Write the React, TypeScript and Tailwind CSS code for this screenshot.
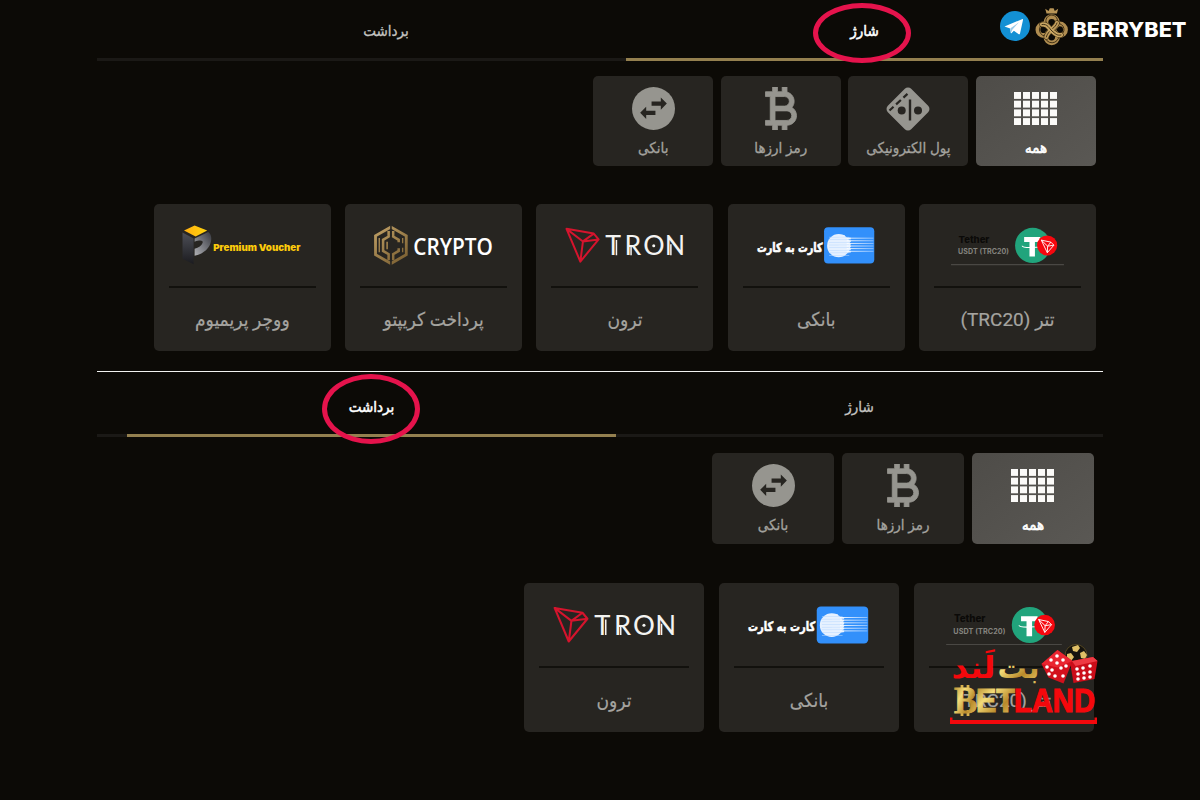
import React from 'react';
import clsx from 'clsx';

const FA = "font-['Roboto','DejaVu_Sans_Condensed','DejaVu_Sans',sans-serif]";

/* ---------- category icons ---------- */

const GridIcon = () => (
  <svg className="w-[43px] h-[33px] mr-[1px]" viewBox="0 0 43 33" fill="#fbfaf8">
    {[0, 1, 2, 3].map((r) =>
      [0, 1, 2, 3, 4].map((c) => (
        <rect key={`${r}-${c}`} x={c * 9} y={r * 8.7} width="7" height="6.9" />
      ))
    )}
  </svg>
);

const MoneyIcon = () => (
  <svg className="w-[44px] h-[44px]" viewBox="0 0 44 44">
    <g transform="rotate(45 22 22)">
      <rect x="5.500" y="5.500" width="33" height="33" rx="4.500" fill="#96958f" />
    </g>
    {/* perforated strip along the upper left side */}
    <path d="M3.500 23.500L24 4.500" stroke="#272521" strokeWidth="2.200" strokeDasharray="5.500 3.500 6.500 3.500" />
    <path d="M24 12.500v21" stroke="#272521" strokeWidth="2.400" />
    <circle cx="15.700" cy="23.500" r="4" fill="#272521" />
    <circle cx="32" cy="23.500" r="4" fill="#272521" />
  </svg>
);

const BitcoinIcon = () => (
  <svg className="w-[32px] h-[43px]" viewBox="6 3 13 18" fill="#96958f" stroke="#96958f" strokeWidth="0.35">
    <path d="M17.060 11.570c.59-.69.94-1.590.94-2.570 0-1.860-1.270-3.430-3-3.870V3h-2v2h-2V3H9v2H6v2h2v10H6v2h3v2h2v-2h2v2h2v-2c2.210 0 4-1.790 4-4 0-1.450-.78-2.730-1.940-3.430zM10 7h4c1.100 0 2 .9 2 2s-.9 2-2 2h-4V7zm5 10h-5v-4h5c1.100 0 2 .9 2 2s-.9 2-2 2z" />
  </svg>
);

const SwapIcon = () => (
  <svg className="w-[43px] h-[43px]" viewBox="2 2 20 20" fill="#96958f">
    <circle cx="12" cy="12" r="10" />
    <g fill="#272521">
      <path d="M11.100 8.800h4.300V6.900l2.800 2.800-2.800 2.900v-1.900h-4.300z" />
      <path d="M12.900 15H8.600v1.900L5.800 14l2.800-2.800v1.900h4.300z" />
    </g>
  </svg>
);

/* ---------- payment logos ---------- */

const TetherLogo = () => (
  <svg className="w-full overflow-visible" direction="ltr" viewBox="0 0 120 40">
    <text x="11.500" y="17.700" fontSize="9.500" fontWeight="800" fill="#0b0a08" textLength="30.500" fontFamily="Inter, sans-serif">Tether</text>
    <text x="11" y="28.700" fontSize="7" fontWeight="700" fill="#85847f" textLength="50.500" fontFamily="Inter, sans-serif">USDT (TRC20)</text>
    <circle cx="85" cy="20.300" r="17.500" fill="#21a47c" />
    <path d="M76.500 11.800h16v5h-5.300v14.500h-5.400V16.800h-5.300z" fill="#fff" />
    <path d="M74.500 20.500c0 2.500 14 2.500 21 0" fill="none" stroke="#fff" strokeWidth="1" />
    <circle cx="99.300" cy="20.300" r="10" fill="#f5080f" />
    <path d="M93.500 15l9.500 2 3 3-6.500 7.500zM93.500 15l6.300 6 6.200-1M99.800 21l-.3 6.500M99.800 21l3.200-4" fill="none" stroke="#fff" strokeWidth="0.9" strokeLinejoin="round" />
    <path d="M4 39.300h112" stroke="#4a4844" strokeWidth="1" />
  </svg>
);

const CardLogo = () => (
  <svg className="w-full overflow-visible" direction="ltr" viewBox="0 0 120 40">
    <defs>
      <linearGradient id="streak" x1="0" y1="0" x2="1" y2="0">
        <stop offset="0" stopColor="#fff" />
        <stop offset="1" stopColor="#8cc0ff" />
      </linearGradient>
    </defs>
    <text x="66" y="26.500" direction="rtl" fontSize="12.500" fontWeight="700" fill="#fff" stroke="#fff" strokeWidth="0.600" textLength="65" lengthAdjust="spacingAndGlyphs" fontFamily="DejaVu Sans, sans-serif">کارت به کارت</text>
    <rect x="67.500" y="2.300" width="49.800" height="36" rx="4" fill="#3290fb" />
    <circle cx="82" cy="20.500" r="11.500" fill="#e6f1ff" />
    {[10, 12.6, 15.2, 17.8, 20.4, 23, 25.6, 28.2].map((y, i) => (
      <React.Fragment key={y}>
        <rect x="82" y={y} width={i % 7 ? 12 : 6} height="1.700" fill="#e6f1ff" />
        <rect x="90" y={y} width={i % 7 ? 26.5 : 0} height="0.900" fill="url(#streak)" />
        <rect x="72.500" y={y + 1.8} width="20" height="0.500" fill="#b8d8ff" />
      </React.Fragment>
    ))}
  </svg>
);

const TronLogo = () => (
  <svg className="w-full overflow-visible" direction="ltr" viewBox="0 0 120 40">
    <path
      d="M2.500 3.800L29.500 8.500l4.800 5.800-18.100 22zM2.500 3.800l16.300 12.500 15.500-2M18.800 16.300l-2.600 20M18.800 16.300L29.500 8.500"
      fill="none" stroke="#d5142d" strokeWidth="2" strokeLinejoin="round"
    />
    <text x="41 60 78.500 100" y="30" fontSize="26.500" fontWeight="400" fill="#f3f3f1" fontFamily="Lato, sans-serif">TRON</text>
    <path d="M52 15v15M66.500 21v9M106 19v11" stroke="#f3f3f1" strokeWidth="1.500" />
    <circle cx="89" cy="20.500" r="1.500" fill="#f3f3f1" />
  </svg>
);

const CryptoLogo = () => (
  <svg className="w-full overflow-visible" direction="ltr" viewBox="0 0 120 40">
    <defs>
      <linearGradient id="bronze" gradientUnits="userSpaceOnUse" x1="0" y1="0" x2="34" y2="40">
        <stop offset="0" stopColor="#c5a56a" />
        <stop offset="1" stopColor="#74592c" />
      </linearGradient>
    </defs>
    <g fill="none" stroke="url(#bronze)">
      <path d="M17.800 2L2.500 10.800v18.600L17.800 38.200 33 29.400V10.800z" strokeWidth="2.800" />
      <path d="M15.500 6v5.500L10 14.700v11l5.500 3.200V35M20 6v5.500l5.500 3.200V17M20 35v-6.100l5.500-3.200V23" strokeWidth="2.500" />
      <path d="M6.200 13v14M29.400 13v5M29.400 22.500V27" strokeWidth="1.300" />
      <path d="M14 16.500v7.500" strokeWidth="1.600" />
    </g>
    <path d="M17.800 0v11M17.800 29.500V40" stroke="#272521" strokeWidth="1.600" />
    <text x="40" y="29.300" fontSize="23.500" fontWeight="600" fill="#fff" textLength="79" lengthAdjust="spacingAndGlyphs" fontFamily="Open Sans, sans-serif">CRYPTO</text>
  </svg>
);

const VoucherLogo = () => (
  <svg className="w-full overflow-visible" direction="ltr" viewBox="0 0 120 40">
    <defs>
      <linearGradient id="cubeTop" x1="0" y1="0" x2="1" y2="0">
        <stop offset="0" stopColor="#ffae12" />
        <stop offset="1" stopColor="#ffd50c" />
      </linearGradient>
      <linearGradient id="cubeLeft" x1="0" y1="0" x2="0" y2="1">
        <stop offset="0" stopColor="#4d4f57" />
        <stop offset="1" stopColor="#1b1b1f" />
      </linearGradient>
      <linearGradient id="cubeRight" x1="0" y1="1" x2="1" y2="0">
        <stop offset="0" stopColor="#b0b1b5" />
        <stop offset="1" stopColor="#36383f" />
      </linearGradient>
    </defs>
    <path d="M.5 7.500l11 6v25.500l-11-5.500z" fill="url(#cubeLeft)" />
    <path d="M12.500 13.500L26 7c3.500 2 4 8 1.500 13-2.500 5-8 9-15 10.500v-7c4-1 7-3 8-6 .5-2-2-3-8-1z" fill="url(#cubeRight)" />
    <path d="M2 5.500L12.500.5 25 5.500l-11.500 6z" fill="url(#cubeTop)" />
    <text x="31" y="26" fontSize="9.200" fontWeight="900" fill="#fdcb0b" textLength="86.500" lengthAdjust="spacingAndGlyphs" fontFamily="Inter, sans-serif">Premium Voucher</text>
  </svg>
);

/* ---------- building blocks ---------- */

type Category = { label: string; icon: React.ReactNode; active?: boolean };
type Method = { label: string; logo: React.ReactNode };

const all: Category = { label: 'همه', icon: <GridIcon />, active: true };
const eMoney: Category = { label: 'پول الکترونیکی', icon: <MoneyIcon /> };
const coins: Category = { label: 'رمز ارزها', icon: <BitcoinIcon /> };
const bank: Category = { label: 'بانکی', icon: <SwapIcon /> };

const tether: Method = { label: 'تتر (TRC20)', logo: <TetherLogo /> };
const card: Method = { label: 'بانکی', logo: <CardLogo /> };
const tron: Method = { label: 'ترون', logo: <TronLogo /> };
const crypto: Method = { label: 'پرداخت کریپتو', logo: <CryptoLogo /> };
const voucher: Method = { label: 'ووچر پریمیوم', logo: <VoucherLogo /> };

type TabProps = { label: string; active?: boolean; ring?: string; className: string };

const Tab = ({ label, active, ring, className }: TabProps) => (
  <div
    className={clsx(
      'relative flex items-center justify-center border-b-[3px] pt-1 text-[15px]',
      active
        ? 'border-[#94804f] text-white [-webkit-text-stroke:0.5px_white]'
        : 'border-transparent text-[#c4c3c0] [-webkit-text-stroke:0.3px_#c4c3c0]',
      className
    )}
  >
    <span>{label}</span>
    {ring && <span className={clsx('absolute w-[98px] rounded-[50%] border-[5px] border-[#e5134c]', ring)} />}
  </div>
);

const CategoryTile = ({ item, className }: { item: Category; className: string }) => (
  <div
    className={clsx(
      'flex flex-col items-center rounded-[5px] pt-[10px] text-[15px]',
      item.active
        ? 'bg-linear-to-br from-[#4e4c48] to-[#5a5854] text-white [-webkit-text-stroke:0.6px_white]'
        : 'bg-[#272521] text-[#a3a29e] [-webkit-text-stroke:0.3px_#a3a29e]',
      className
    )}
  >
    <div className="h-[45px] flex items-center justify-center">{item.icon}</div>
    <span className="mt-[7px] leading-5">{item.label}</span>
  </div>
);

const MethodCard = ({ item, className }: { item: Method; className: string }) => (
  <div className={clsx('flex flex-col rounded-[5px] bg-[#272521] px-[15px]', className)}>
    <div className="h-[57%] pt-[21px] px-[13px] border-b-2 border-[#12110d]">{item.logo}</div>
    <div className="flex-1 flex items-center justify-center pt-0.5 text-[19px] text-[#a5a4a0] [-webkit-text-stroke:0.2px_#a5a4a0]">
      {item.label}
    </div>
  </div>
);

const BrandLogo = () => (
  <svg className="absolute left-[1000px] top-[6px]" direction="ltr" width="190" height="42" viewBox="0 0 190 42">
    <circle cx="15" cy="20" r="15" fill="#1390d4" />
    <path d="M4.500 20.500L22 13.200c.8-.3 1.200.1 1 .9l-3 13.400c-.2.9-.8 1.100-1.600.6l-4.500-3.300-2.200 2.200c-.5.4-.9.3-1-.3l-.5-4.300z" fill="#fff" />
    <path d="M10.500 22.200l8.500-6-6.500 7.200-1.200 3z" fill="#9ccbe9" />
    <path d="M46.500 7.500l-1.300-4.800 3.400 2.300 1.200-2.800h3.800l1.200 2.800 3.400-2.300-1.300 4.800z" fill="#b89557" />
    <g fill="none" stroke="#b08d50" strokeWidth="4.800">
      <circle cx="51.700" cy="16.500" r="5.800" />
      <circle cx="43.700" cy="23.700" r="5.800" />
      <circle cx="59.700" cy="23.700" r="5.800" />
      <circle cx="51.700" cy="31" r="5.800" />
    </g>
    <g fill="none" stroke="#35270f" strokeWidth="0.900">
      <path d="M46.500 17.500a5.800 5.800 0 1 1 10.400 0a6 6 0 1 1 2 12a6.200 6.200 0 1 1-14 .5a6 6 0 1 1 1.600-12.500" />
    </g>
    <g fill="none" strokeLinecap="round">
      <path d="M57 17c-1 5-9 7-10.700 14M42 18.500c6-1 7 4 10 6.500s5 5 9 4" stroke="#35270f" strokeWidth="5.400" />
      <path d="M57 17c-1 5-9 7-10.700 14" stroke="#bf9b5b" strokeWidth="4.200" />
      <path d="M57 17c-1 5-9 7-10.700 14" stroke="#35270f" strokeWidth="0.900" />
      <path d="M42 18.500c6-1 7 4 10 6.500s5 5 9 4" stroke="#c8a562" strokeWidth="4.200" />
      <path d="M42 18.500c6-1 7 4 10 6.500s5 5 9 4" stroke="#35270f" strokeWidth="0.900" />
    </g>
    <text x="72.500" y="30.900" fontSize="20.500" fontWeight="800" fill="#fff" textLength="114" lengthAdjust="spacingAndGlyphs" fontFamily="Inter, sans-serif">BERRYBET</text>
  </svg>
);

const pips = [
  [103, 20], [109, 16], [115, 20], [109, 23], [99, 27], [104, 30], [101, 34], [107, 36], [113, 28], [118, 26],
  [115, 36], [129, 29], [135, 28], [142, 26], [130, 34], [136, 33], [142, 32], [130, 39], [136, 38], [142, 37],
];

const Watermark = () => (
  <svg className="absolute left-[948px] top-[640px] overflow-visible" direction="ltr" width="152" height="88" viewBox="0 0 152 88">
    <defs>
      <linearGradient id="gold" x1="0" y1="0" x2="1" y2="1">
        <stop offset="0" stopColor="#a5771d" />
        <stop offset="0.350" stopColor="#f4dc78" />
        <stop offset="0.650" stopColor="#b98a2b" />
        <stop offset="1" stopColor="#ecd06b" />
      </linearGradient>
    </defs>
    <text x="91.500" y="38" direction="rtl" fontSize="30" fontWeight="700" fill="url(#gold)" textLength="42" lengthAdjust="spacingAndGlyphs" fontFamily="DejaVu Sans, sans-serif">بت</text>
    <text x="47.500" y="38" direction="rtl" fontSize="30" fontWeight="700" fill="#f4080c" textLength="44" lengthAdjust="spacingAndGlyphs" fontFamily="DejaVu Sans, sans-serif">لَند</text>

    <circle cx="128" cy="15.500" r="11" fill="#15130e" stroke="#6b5926" strokeWidth="0.700" />
    <path d="M124 7l6-2 2 3-3 4-4-1zM119 14l4-1 3 4-3 4-4-2zM132 13l4-2 3 4-2 4-4-1z" fill="#dfbf66" />
    <path d="M93.500 24L109.500 10l15 11-9 22.500-15-6z" fill="#d3101c" />
    <path d="M93.500 24l16-14 15 11-15 6.500z" fill="#ea2530" />
    <path d="M124 21l21-4 4.500 4-3 18-21 4-3-18z" fill="#cb0d19" />
    <path d="M124 21l21-4 4.500 4-22 5z" fill="#ee3a43" />
    <g fill="#fff">
      {pips.map(([x, y]) => (
        <circle key={`${x}-${y}`} cx={x} cy={y} r="1.800" />
      ))}
    </g>

    <path d="M14 45v6M20 45v6M14 70v6M20 70v6" stroke="#d9b24e" strokeWidth="2.800" />
    <text x="6" y="72.500" fontSize="37" fontWeight="700" fill="url(#gold)" stroke="url(#gold)" strokeWidth="0.800" textLength="23" lengthAdjust="spacingAndGlyphs" fontFamily="Liberation Serif, serif">B</text>
    <text x="28" y="72" fontSize="33.500" fontWeight="700" fill="url(#gold)" stroke="url(#gold)" strokeWidth="1.200" textLength="39" lengthAdjust="spacingAndGlyphs" fontFamily="Liberation Sans, sans-serif">ET</text>
    <text x="66" y="72" fontSize="33.500" fontWeight="700" fill="#f4080c" stroke="#f4080c" strokeWidth="1.200" textLength="81" lengthAdjust="spacingAndGlyphs" fontFamily="Liberation Sans, sans-serif">LAND</text>
    <path d="M2 77.500h2.500v2.500h142v-2.500h2.500v6.500H2z" fill="#f4080c" />
  </svg>
);

export default function App() {
  return (
    <div dir="rtl" className={clsx('relative w-[1200px] h-[800px] overflow-hidden bg-[#0c0a06] px-[97px]', FA)}>
      {/* Deposit */}
      <section className="h-[372px] border-b border-[#f2f2f0]">
        <div className="flex h-[61px] bg-[linear-gradient(#1b1916,#1b1916)] bg-[length:100%_3px] bg-bottom bg-no-repeat">
          <Tab label="شارژ" active ring="left-[187px] top-[3px] h-[60px]" className="w-[477px]" />
          <Tab label="برداشت" className="w-[480px]" />
        </div>
        <div className="flex gap-[7.600px] mt-[15px] pr-[7px]">
          {[all, eMoney, coins, bank].map((c) => (
            <CategoryTile key={c.label} item={c} className="w-[120px] h-[90px]" />
          ))}
        </div>
        <div className="flex gap-[14.300px] mt-[38px] pr-[7px]">
          {[tether, card, tron, crypto, voucher].map((m) => (
            <MethodCard key={m.label} item={m} className="w-[177px] h-[147px]" />
          ))}
        </div>
      </section>

      {/* Withdraw */}
      <section>
        <div className="flex h-[65px] pt-[5px] bg-[linear-gradient(#1b1916,#1b1916)] bg-[length:100%_3px] bg-bottom bg-no-repeat">
          <Tab label="شارژ" className="w-[487px]" />
          <Tab label="برداشت" active ring="left-[195px] -top-[3px] h-[70px]" className="w-[489px]" />
        </div>
        <div className="flex gap-2 mt-[16px] pr-[9px]">
          {[all, coins, bank].map((c) => (
            <CategoryTile key={c.label} item={c} className="w-[122px] h-[91px]" />
          ))}
        </div>
        <div className="flex gap-[15px] mt-[39px] pr-[9px]">
          {[tether, card, tron].map((m) => (
            <MethodCard key={m.label} item={m} className="w-[180px] h-[149px]" />
          ))}
        </div>
      </section>

      <BrandLogo />
      <Watermark />
    </div>
  );
}
